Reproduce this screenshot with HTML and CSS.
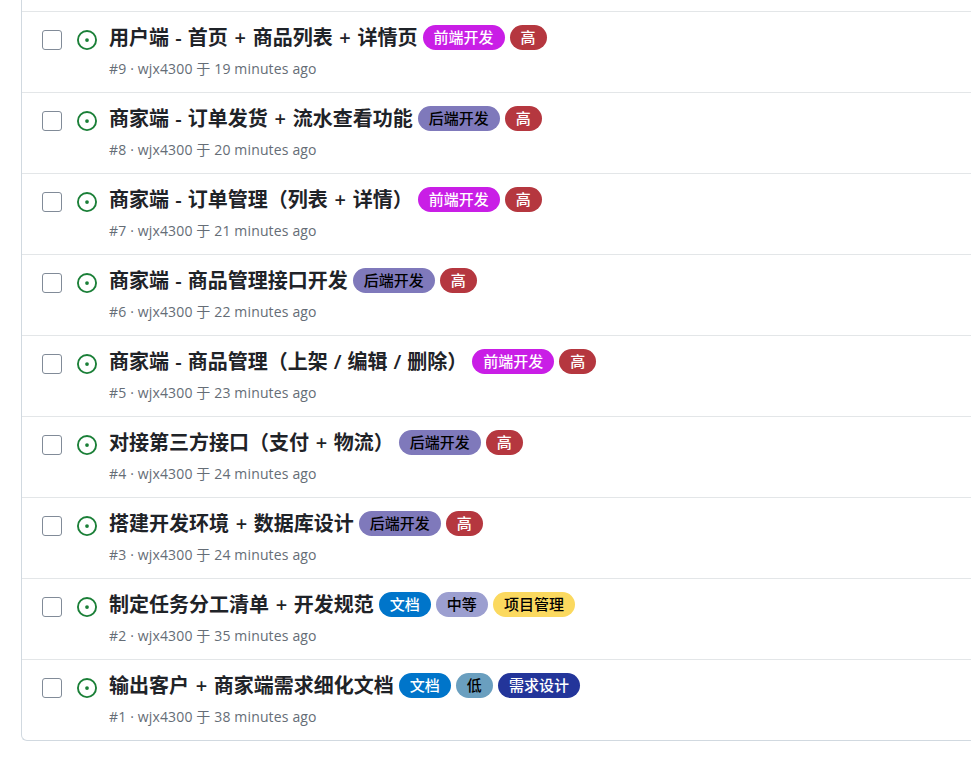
FILE: index.html
```html
<!DOCTYPE html>
<html lang="zh-CN">
<head>
<meta charset="utf-8">
<title>Issues</title>
<link rel="stylesheet" href="styles.css">
</head>
<body>
<svg class="defs" width="0" height="0" aria-hidden="true"><defs><symbol id="open" viewBox="0 0 16 16"><path d="M8 9.5a1.5 1.5 0 1 0 0-3 1.5 1.5 0 0 0 0 3Z"/><path d="M8 0a8 8 0 1 1 0 16A8 8 0 0 1 8 0ZM1.5 8a6.5 6.5 0 1 0 13 0 6.5 6.5 0 0 0-13 0Z"/></symbol></defs></svg>
<main class="issues">
<div class="stub"></div>
<div class="row"><input class="check" type="checkbox"><svg class="icon"><use href="#open"/></svg><div class="body"><div class="line"><span class="title">用户端 <span class="dash">-</span> 首页 <span class="sym">+</span> 商品列表 <span class="sym">+</span> 详情页</span><span class="label fe">前端开发</span><span class="label high">高</span></div><div class="meta">#9 · wjx4300 于 19 minutes ago</div></div></div>
<div class="row"><input class="check" type="checkbox"><svg class="icon"><use href="#open"/></svg><div class="body"><div class="line"><span class="title">商家端 <span class="dash">-</span> 订单发货 <span class="sym">+</span> 流水查看功能</span><span class="label be">后端开发</span><span class="label high">高</span></div><div class="meta">#8 · wjx4300 于 20 minutes ago</div></div></div>
<div class="row"><input class="check" type="checkbox"><svg class="icon"><use href="#open"/></svg><div class="body"><div class="line"><span class="title">商家端 <span class="dash">-</span> 订单管理（列表 <span class="sym">+</span> 详情）</span><span class="label fe">前端开发</span><span class="label high">高</span></div><div class="meta">#7 · wjx4300 于 21 minutes ago</div></div></div>
<div class="row"><input class="check" type="checkbox"><svg class="icon"><use href="#open"/></svg><div class="body"><div class="line"><span class="title">商家端 <span class="dash">-</span> 商品管理接口开发</span><span class="label be">后端开发</span><span class="label high">高</span></div><div class="meta">#6 · wjx4300 于 22 minutes ago</div></div></div>
<div class="row"><input class="check" type="checkbox"><svg class="icon"><use href="#open"/></svg><div class="body"><div class="line"><span class="title">商家端 <span class="dash">-</span> 商品管理（上架 <span class="slash">/</span> 编辑 <span class="slash">/</span> 删除）</span><span class="label fe">前端开发</span><span class="label high">高</span></div><div class="meta">#5 · wjx4300 于 23 minutes ago</div></div></div>
<div class="row"><input class="check" type="checkbox"><svg class="icon"><use href="#open"/></svg><div class="body"><div class="line"><span class="title">对接第三方接口（支付 <span class="sym">+</span> 物流）</span><span class="label be">后端开发</span><span class="label high">高</span></div><div class="meta">#4 · wjx4300 于 24 minutes ago</div></div></div>
<div class="row"><input class="check" type="checkbox"><svg class="icon"><use href="#open"/></svg><div class="body"><div class="line"><span class="title">搭建开发环境 <span class="sym">+</span> 数据库设计</span><span class="label be">后端开发</span><span class="label high">高</span></div><div class="meta">#3 · wjx4300 于 24 minutes ago</div></div></div>
<div class="row"><input class="check" type="checkbox"><svg class="icon"><use href="#open"/></svg><div class="body"><div class="line"><span class="title">制定任务分工清单 <span class="sym">+</span> 开发规范</span><span class="label doc">文档</span><span class="label mid">中等</span><span class="label pm">项目管理</span></div><div class="meta">#2 · wjx4300 于 35 minutes ago</div></div></div>
<div class="row"><input class="check" type="checkbox"><svg class="icon"><use href="#open"/></svg><div class="body"><div class="line"><span class="title">输出客户 <span class="sym">+</span> 商家端需求细化文档</span><span class="label doc">文档</span><span class="label low">低</span><span class="label req">需求设计</span></div><div class="meta">#1 · wjx4300 于 38 minutes ago</div></div></div>
</main>
</body>
</html>
```
FILE: styles.css
```css
html, body { margin: 0; padding: 0; background: #fff; overflow: hidden; height: 762px; }
body { font-family: "Open Sans", "Noto Sans CJK SC", sans-serif; color: #1f2328; }
.defs { display: block; height: 0; }
.issues { margin-left: 21px; width: 1000px; border: 1px solid #d1d9e0; border-top: 0; border-right: 0; border-radius: 0 0 0 6px; }
.stub { height: 11px; }
.row { display: flex; align-items: flex-start; height: 80px; border-top: 1px solid #e3e6e8; }
.check { appearance: none; box-sizing: border-box; width: 20px; height: 20px; margin: 18px 0 0 20px; border: 1px solid #818b98; border-radius: 3px; background: #fff; flex: none; }
.icon { width: 20px; height: 20px; margin: 18px 0 0 15px; fill: #1a7f37; flex: none; }
.body { margin: 13px 0 0 12px; }
.line { display: flex; align-items: center; height: 25px; gap: 5px; }
.title { font-size: 20px; font-weight: 600; line-height: 25px; color: #1f2328; white-space: nowrap; }
.sym { margin: 0 1.5px; }
.dash { margin: 0 1px; }
.slash { margin: 0 0.75px; }
.label { height: 25px; line-height: 25px; padding: 0 11px; border-radius: 13px; font-size: 15px; font-weight: 500; white-space: nowrap; }
.fe { background: #c91ee6; color: #fff; }
.be { background: #7f79bb; color: #000; }
.high { background: #b5373f; color: #fff; }
.doc { background: #0075ca; color: #fff; }
.mid { background: #9c9fd0; color: #000; }
.pm { background: #fbd95f; color: #000; }
.low { background: #6a9fbf; color: #000; }
.req { background: #23359a; color: #fff; }
.meta { margin-top: 9px; font-size: 14px; line-height: 20px; color: #656d76; white-space: nowrap; letter-spacing: 0.15px; }
```
